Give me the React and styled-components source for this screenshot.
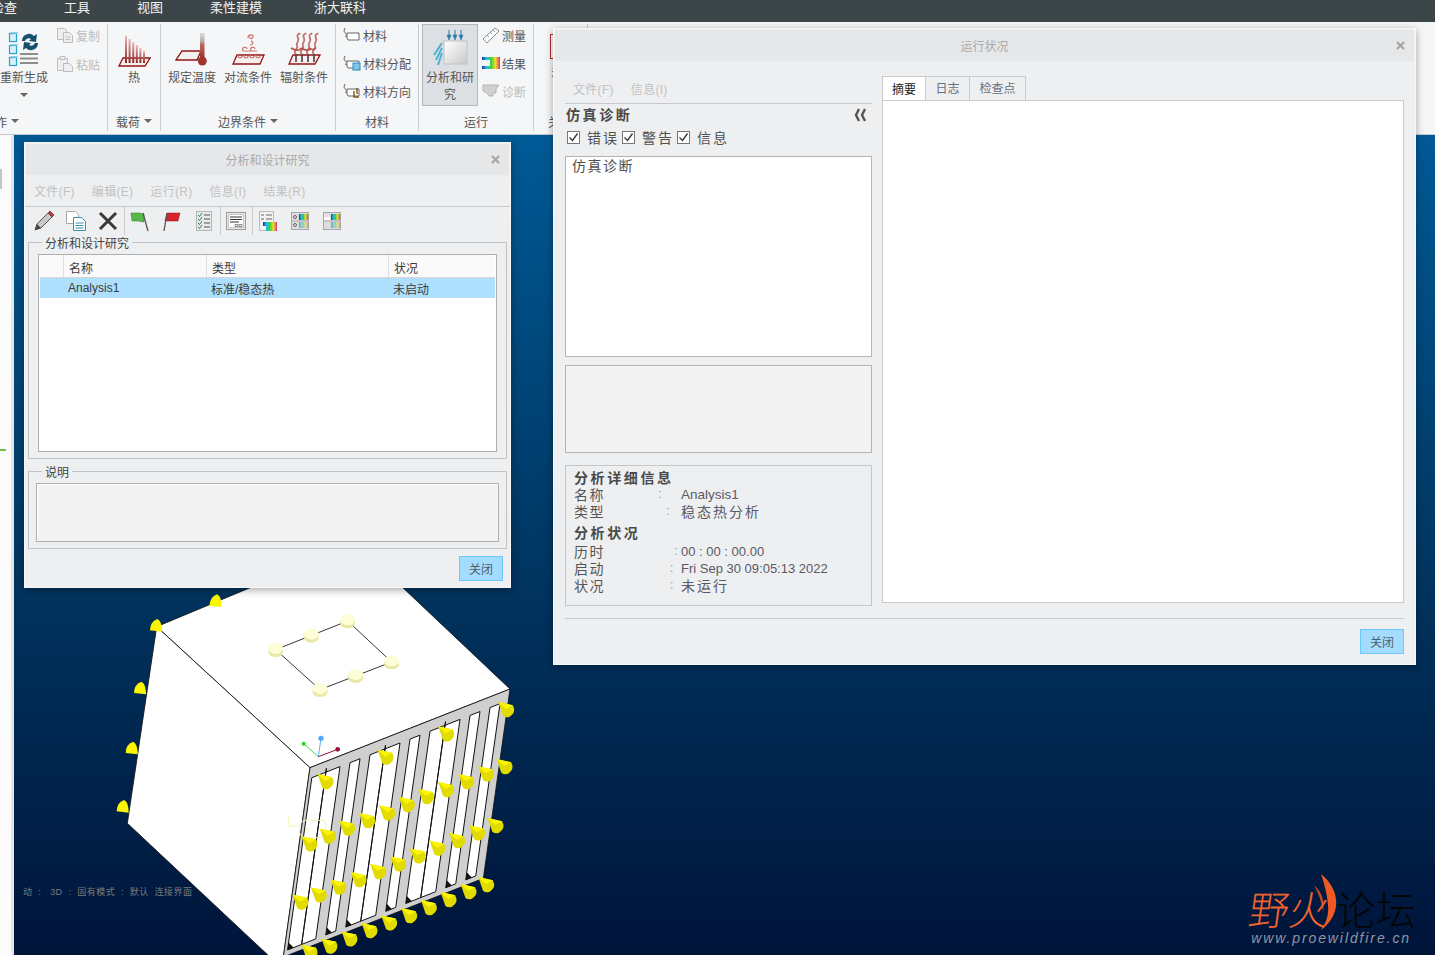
import React from "react";
import styled,{createGlobalStyle} from "styled-components";

const FONT = `"Liberation Sans","Noto Sans CJK SC",sans-serif`;
const GlobalStyle = createGlobalStyle`
    html,body{margin:0;padding:0;background:#fff;}
    body{font-family:${FONT};font-size:12px;color:#444;}
    *{box-sizing:border-box;}
`;
const Page = styled.div`
    width:1435px;height:955px;position:relative;overflow:hidden;display:flex;flex-direction:column;
`;
const MenuBar = styled.div`
    height:22px;flex:none;background:#3c4547;display:flex;align-items:flex-start;margin-left:-9px;line-height:16px;
`;
const MenuBarItem = styled.div`
    font-size:13px;color:#f2f3f3;margin-right:${(p) => p.$gap}px;white-space:nowrap;
`;
const Ribbon = styled.div`
    height:113px;flex:none;background:#f5f6f7;display:flex;border-bottom:1px solid #c4c6c8;margin-left:-11px;
`;
const Group = styled.div`
    width:${(p) => p.$w}px;flex:none;display:flex;flex-direction:column;border-right:${(p) => p.$last ? "none" : "1px solid #c9cbcd"};margin:2px 0 3px;
`;
const GroupBody = styled.div`
    height:88px;flex:none;display:flex;padding:${(p) => p.$pad || "0"};gap:${(p) => p.$gap || 0}px;
`;
const GroupLabel = styled.div`
    flex:1;display:flex;align-items:center;justify-content:${(p) => p.$align || "center"};gap:4px;color:#555;padding-left:${(p) => p.$pl || 0}px;padding-bottom:1px;margin-left:${(p) => p.$ml || 0}px;
    & i{width:0;height:0;border-left:4px solid transparent;border-right:4px solid transparent;border-top:4px solid #666;}
`;
const Caret = styled.i`
    width:0;height:0;border-left:4px solid transparent;border-right:4px solid transparent;border-top:4px solid #666;margin-top:6px;
`;
const BigButton = styled.div`
    width:${(p) => p.$w || 56}px;display:flex;flex-direction:column;align-items:center;color:#555;line-height:17px;text-align:center;flex:none;
    & .ic{height:44px;display:flex;align-items:flex-end;justify-content:center;margin-bottom:2px;}
    ${(p) => p.$active && `background:#dcdfe3;border:1px solid #b5b8bb;height:82px;& .ic{height:42px;margin-bottom:3px;}`}
`;
const NoWrap = styled.div`
    white-space:nowrap;
`;
const SmallCol = styled.div`
    display:flex;flex-direction:column;gap:${(p) => p.$gap || 9}px;padding-top:${(p) => p.$top || 1}px;
`;
const SmallItem = styled.div`
    display:flex;align-items:center;gap:2px;height:20px;white-space:nowrap;color:${(p) => p.$off ? "#bcbcbc" : "#555"};
`;
const Main = styled.div`
    flex:1;display:flex;min-height:0;
`;
const LeftStrip = styled.div`
    width:14px;flex:none;background:#fbfbfb;border-right:3px solid #e4e6e6;position:relative;
    & b{position:absolute;left:0;top:314px;width:6px;height:2px;background:#6cc04a;}
    & u{position:absolute;left:0;top:34px;width:2px;height:20px;background:#c5c5c5;}
`;
const Viewport = styled.div`
    flex:1;position:relative;overflow:hidden;background:linear-gradient(180deg,#005a96 0%,#00345f 55%,#00143a 100%);
`;
const ModelCanvas = styled.svg`
    position:absolute;left:86px;top:450px;width:430px;height:370px;
`;
const StatusOverlay = styled.div`
    position:absolute;left:9px;top:750px;font-size:9px;letter-spacing:.45px;color:#7b7b7b;white-space:pre;
`;
const Watermark = styled.div`
    position:absolute;right:19px;bottom:9px;width:167px;display:flex;flex-direction:column;align-items:flex-end;
`;
const MarkTitle = styled.div`
    display:flex;font-size:40px;line-height:46px;font-weight:300;position:relative;white-space:nowrap;
    & span{color:#f0622e;transform:skewX(-8deg);display:inline-block;}
    & em{font-style:normal;color:#050505;margin-left:7px;}
    & svg{position:absolute;left:64px;top:-16px;}
`;
const MarkUrl = styled.div`
    font-size:14px;font-style:italic;color:#8f97a3;letter-spacing:1.9px;line-height:16px;margin:-4px 5px 0 0;white-space:nowrap;
`;
const Window = styled.div`
    position:absolute;left:${(p) => p.$x}px;top:${(p) => p.$y}px;width:${(p) => p.$w}px;height:${(p) => p.$h}px;background:#eeeff1;border:1px solid #f8f8f8;box-shadow:0 2px 8px rgba(0,0,0,.35);display:flex;flex-direction:column;
`;
const TitleBar = styled.div`
    height:31px;flex:none;margin:1px 1px 0;padding-bottom:1px;background:#e6e7e9;display:flex;align-items:center;justify-content:center;position:relative;color:#a9a9a9;
    & svg{position:absolute;right:9px;top:11px;}
`;
const WinMenu = styled.div`
    display:flex;gap:${(p) => p.$gap || 17}px;color:#c2c2c2;font-size:12px;letter-spacing:.3px;align-items:center;height:${(p) => p.$h || 32}px;border-bottom:1px solid #c8c9cb;padding-left:${(p) => p.$pl || 9}px;padding-bottom:${(p) => p.$pb || 0}px;flex:none;
`;
const Toolbar = styled.div`
    display:flex;align-items:center;height:28px;padding-left:3px;flex:none;
`;
const ToolButton = styled.div`
    width:32px;height:28px;display:flex;align-items:center;justify-content:center;flex:none;
`;
const ToolSep = styled.div`
    width:1px;height:28px;background:#c9cacc;margin:0 -1px 0 0;flex:none;
`;
const Field = styled.fieldset`
    margin:${(p) => p.$m || "0 3px"};padding:${(p) => p.$pad};border:1px solid #c2c3c5;min-width:0;flex:none;height:${(p) => p.$h}px;
`;
const Legend = styled.legend`
    margin-left:${(p) => p.$ml}px;padding:0 3px;line-height:14px;font-size:12px;color:#444;transform:translateY(2px);
`;
const TableBox = styled.div`
    height:198px;border:1px solid #aeaeae;background:#fff;padding:0 1px;
`;
const Row = styled.div`
    display:grid;grid-template-columns:24px 143px 182px 1fr;height:${(p) => p.$head ? 23 : 20}px;align-items:center;color:#3c3c3c;
    background:${(p) => p.$head ? "#fafafa" : "#aee0fd"};
    ${(p) => p.$head && "border-bottom:1px solid #d6d6d6;"}
    & > div{height:100%;display:flex;align-items:center;padding-left:${(p) => p.$head ? 5 : 4}px;padding-top:${(p) => p.$head ? 2 : 0}px;border-right:${(p) => p.$head ? "1px solid #dedede" : "none"};white-space:nowrap;}
    & > div:last-child{border-right:none;}
`;
const NoteBox = styled.div`
    height:59px;background:#f3f3f3;border:1px solid #b0b0b0;box-shadow:inset 1px 1px 0 #fff;
`;
const CloseRow = styled.div`
    display:flex;justify-content:flex-end;padding:${(p) => p.$pad};flex:none;
`;
const CloseButton = styled.div`
    width:44px;height:25px;background:#a3dcff;border:1px solid #6cc8ff;display:flex;align-items:center;justify-content:center;color:#4f5d66;
`;
const RunBody = styled.div`
    flex:none;display:flex;gap:10px;padding:15px 11px 0;
`;
const LeftCol = styled.div`
    width:307px;flex:none;display:flex;flex-direction:column;
`;
const RightCol = styled.div`
    flex:1;display:flex;flex-direction:column;
`;
const DiagHead = styled.div`
    height:24px;display:flex;align-items:center;justify-content:space-between;padding:0 6px 2px 1px;flex:none;
`;
const BoldTitle = styled.div`
    font-size:14px;font-weight:700;color:#4a4a4a;letter-spacing:2.6px;line-height:${(p) => p.$lh || 20}px;margin:${(p) => p.$m || "0"};
`;
const Checks = styled.div`
    display:flex;align-items:center;height:20px;flex:none;padding:0 0 2px 2px;
`;
const CheckItem = styled.div`
    display:flex;align-items:center;gap:7px;font-size:14px;letter-spacing:2px;color:#4f4f4f;margin-right:3px;
    & span{width:13px;height:13px;border:1px solid #777;background:#fff;display:flex;align-items:center;justify-content:center;}
`;
const DiagBox = styled.div`
    height:${(p) => p.$h}px;margin-top:${(p) => p.$mt}px;flex:none;background:${(p) => p.$bg || "#fff"};border:1px solid #b4b4b4;padding:0 6px;font-size:14px;letter-spacing:1.5px;color:#4f4f4f;line-height:19px;
`;
const Details = styled.div`
    height:141px;margin-top:12px;flex:none;border:1px solid #c5c6c8;padding:6px 8px;
`;
const DetailRow = styled.div`
    display:grid;grid-template-columns:${(p) => p.$colon}px ${(p) => 107 - p.$colon}px 1fr;height:17px;align-items:center;font-size:14px;letter-spacing:1.5px;color:#555;white-space:nowrap;
    & .val{font-size:${(p) => p.$small || 14}px;letter-spacing:${(p) => p.$small ? 0 : 2}px;color:#5a5a66;}
    & .col{color:#8a9aa6;font-size:12px;}
`;
const Tabs = styled.div`
    display:flex;height:25px;flex:none;
`;
const Tab = styled.div`
    width:${(p) => p.$w}px;height:25px;padding-bottom:2px;border:1px solid #c8c9cb;border-left:${(p) => p.$first ? "1px solid #c8c9cb" : "none"};border-bottom:${(p) => p.$active ? "none" : "1px solid #c8c9cb"};background:${(p) => p.$active ? "#fff" : "#eeeff1"};color:${(p) => p.$active ? "#222" : "#66707a"};display:flex;align-items:center;justify-content:center;
`;
const TabPanel = styled.div`
    height:503px;flex:none;margin-top:-1px;background:#fff;border:1px solid #c8c9cb;
`;
const RunFooter = styled.div`
    margin:12px 11px 0;border-top:1px solid #c8c9cb;flex:none;
`;

// ---- ribbon icons ----
const XIcon = () => (
    <svg width="9" height="9" viewBox="0 0 9 9"><path d="M1 1l7 7M8 1L1 8" stroke="#a5a5a5" strokeWidth="2.2"/></svg>
);
const RegenIcon = () => (
    <svg width="40" height="36" viewBox="0 0 40 36">
        {[1,13,25].map((y) => (
            <g key={y}>
                <rect x="5.500" y={y+.5} width="7" height="8" fill="#d9eff9" stroke="#2aa3cc" strokeWidth="1.200"/>
                <path d={`M6 ${y}l2-1h6l-1 2z`} fill="#8fcbe2"/>
            </g>
        ))}
        <path d="M18 9a7 7 0 0 1 12-5l3-2-1 8-7-1 2-2a4 4 0 0 0-6 2z" fill="#17506e"/>
        <path d="M34 11a7 7 0 0 1-12 5l-3 2 1-8 7 1-2 2a4 4 0 0 0 6-2z" fill="#17506e"/>
        <path d="M16 22h18M16 26.500h18M16 31h18" stroke="#8d8d8d" strokeWidth="1.800"/>
    </svg>
);
const CopyIcon = () => (
    <svg width="18" height="18" viewBox="0 0 18 18" fill="#eee" stroke="#bdbdbd"><path d="M1.500 2.500h7l2 2v9h-9z"/><path d="M7.500 6.500h6l3 3v7h-9z"/><path d="M9.500 11h5M9.500 13.500h5"/></svg>
);
const PasteIcon = () => (
    <svg width="18" height="18" viewBox="0 0 18 18" fill="#eee" stroke="#bdbdbd"><path d="M1.500 3.500h10v12h-10z"/><path d="M4 1.500h5v3H4z"/><path d="M7.500 8.500h6l3 3v5h-9z"/></svg>
);
const HeatIcon = () => (
    <svg width="34" height="34" viewBox="0 0 34 34">
        <defs><linearGradient id="bar" x1="0" x2="0" y1="0" y2="1"><stop offset="0" stopColor="#e9b9b4"/><stop offset="1" stopColor="#8e2420"/></linearGradient></defs>
        <path d="M6 24h27l-5 8H2z" fill="#f6f1f1" stroke="#941414" strokeWidth="1.300"/>
        {[0,1,2,3,4,5].map((i) => <rect key={i} x={8+i*3.600} y={2+i*3} width="2" height={27-i*3} fill="url(#bar)"/>)}
    </svg>
);
const TempIcon = () => (
    <svg width="34" height="36" viewBox="0 0 34 36">
        <defs><linearGradient id="thermo" x1="0" x2="0" y1="0" y2="1"><stop offset="0" stopColor="#dcdcdc"/><stop offset=".3" stopColor="#b0b0b0"/><stop offset=".42" stopColor="#c06a60"/><stop offset="1" stopColor="#8e2a26"/></linearGradient></defs>
        <path d="M7 19h19l-4 9H1z" fill="#f1f1f1" stroke="#8f1414" strokeWidth="1.300"/>
        <rect x="25" y="1" width="4.500" height="27" fill="url(#thermo)"/>
        <circle cx="27.300" cy="29" r="4.500" fill="#a0332c"/>
    </svg>
);
const ConvectIcon = () => (
    <svg width="34" height="36" viewBox="0 0 34 36" fill="none">
        <path d="M6 23h27l-4 9H2z" fill="#f6f1f1" stroke="#941414" strokeWidth="1.300"/>
        <g stroke="#c9736c" strokeWidth="1.200">
            <path d="M11 24c0 3-5 2-4-1M17 24c0 3-5 2-4-1M23 24c0 3-5 2-4-1M29 24c0 3-5 2-4-1"/>
            <path d="M12 19c-2-4 4-5 4-2M20 19c-2-4 4-5 4-2M12 19h6M18 19h8"/>
            <path d="M19 13c3 0 4-3 1-4M17 6c0-4 6-4 5-1s-4 1-3 0"/>
        </g>
    </svg>
);
const RadIcon = () => (
    <svg width="34" height="36" viewBox="0 0 34 36" fill="none">
        <path d="M6 23h27l-5 9H2z" fill="#f6f1f1" stroke="#941414" strokeWidth="1.300"/>
        {[9,15,21,27].map((x) => <path key={x} d={`M${x} 30v-8`} stroke="#553a38" strokeWidth="1.600"/>)}
        {[7,13,19,25].map((x) => <path key={x} d={`M${x+2} 22c-4-3 3-5 1-8s3-4 1-8 1-3 2-5`} stroke="#c4706a" strokeWidth="1.800"/>)}
        <path d="M4 16c5 3 9 3 10 0M14 16c5 3 9 3 10 0M22 16c3 2 5 2 7 0" stroke="#b4524c" strokeWidth="1.500"/>
    </svg>
);
const MatIcon = ({kind}) => (
    <svg width="18" height="18" viewBox="0 0 18 18" fill="none">
        <path d="M2 2c-2 4 0 5 2 6s0 3-2 2" stroke="#555" strokeWidth="1"/>
        <path d="M4 7h12v7H5l-1-2z" fill="#fff" stroke="#666"/>
        {kind == 1 && <rect x="10" y="9" width="7" height="7" fill="#7cc7ea" stroke="#2a88b8"/>}
        {kind == 2 && <path d="M11 9v6h5M14 6v6" stroke="#7a5a1c" strokeWidth="1.400"/>}
    </svg>
);
const MeasureIcon = () => (
    <svg width="18" height="18" viewBox="0 0 18 18"><path d="M1 13L13 2l4 3L5 17z" fill="#fff" stroke="#8a8a8a"/><path d="M5 9l2 2M8 6l2 2M11 4l2 2" stroke="#6fb2d6"/></svg>
);
const Rainbow = ({id}) => (
    <defs>
        <linearGradient id={id} x1="0" x2="1" y1="0" y2="0">
            <stop offset="0" stopColor="#1530b8"/><stop offset=".25" stopColor="#22c0d8"/><stop offset=".5" stopColor="#3cd040"/><stop offset=".75" stopColor="#f4e020"/><stop offset="1" stopColor="#e02a90"/>
        </linearGradient>
    </defs>
);
const ResultIcon = () => (
    <svg width="18" height="14" viewBox="0 0 18 14"><Rainbow id="rb1"/><path d="M0 1h18v12H0z" fill="url(#rb1)"/><path d="M0 4h8v6H0z" fill="#f5f6f7"/></svg>
);
const DiagIcon = () => (
    <svg width="18" height="14" viewBox="0 0 18 14"><path d="M1 1h16l-3 4v4h-3v3H7L5 9 1 7z" fill="#d0d0d0" stroke="#b5b5b5"/></svg>
);
const AnalysisIcon = () => (
    <svg width="36" height="38" viewBox="0 0 36 38">
        <defs><linearGradient id="sq" x1="0" x2="1" y1="0" y2="1"><stop offset="0" stopColor="#fff"/><stop offset="1" stopColor="#c9c9c9"/></linearGradient></defs>
        <rect x="12" y="12" width="23" height="23" fill="url(#sq)" stroke="#c2c2c2"/>
        {[17,23,29].map((x) => <path key={x} d={`M${x} 1v5l-2 0 2 5 2-5-2 0z`} fill="#2b7ba8" stroke="#2b7ba8" strokeWidth=".6"/>)}
        {[0,5,10].map((d) => <path key={d} d={`M${2+d*.4} ${26+d}L10 ${14+d}`} stroke="#4eb0d2" strokeWidth="2"/>)}
    </svg>
);
const PartIcon = () => (
    <svg width="14" height="30" viewBox="0 0 14 30"><rect x=".5" y=".5" width="13" height="24" fill="#fff" stroke="#b03030"/></svg>
);

// ---- toolbar icons ----
const Pencil = () => (
    <svg width="22" height="22" viewBox="0 0 22 22"><path d="M2 20l2-6L15 3l4 4L8 18z" fill="#c9c9c9" stroke="#555"/><path d="M15 3l2-2 4 4-2 2z" fill="#b8403c" stroke="#7a2a28" strokeWidth=".7"/><path d="M2 20l2-6 4 4z" fill="#444"/></svg>
);
const DocCopy = () => (
    <svg width="22" height="22" viewBox="0 0 22 22"><path d="M1.500 1.500h9l3 3v9h-12z" fill="#fff" stroke="#a8a8a8"/><path d="M8.500 7.500h8l4 4v9h-12z" fill="#fff" stroke="#3a8cb4"/><path d="M10.500 13h8M10.500 15.500h8M10.500 18h8" stroke="#3a8cb4"/></svg>
);
const BigX = () => (
    <svg width="20" height="20" viewBox="0 0 20 20"><path d="M2 2l16 16M18 2L2 18" stroke="#3a3a3a" strokeWidth="3"/></svg>
);
const Flag = ({fill,dark,rev}) => (
    <svg width="20" height="22" viewBox="0 0 20 22">
        {rev
            ? <><path d="M1 3h8l5 1v8l-6-1-6 0z" fill={fill} stroke={dark} strokeWidth=".5"/><path d="M13 3l5 18" stroke="#555" strokeWidth="1.300"/></>
            : <><path d="M5 3h13l-2 8H3z" fill={fill} stroke={dark} strokeWidth=".5"/><path d="M5 3L2 21" stroke="#555" strokeWidth="1.300"/></>}
    </svg>
);
const CheckList = () => (
    <svg width="16" height="20" viewBox="0 0 16 20"><rect x=".5" y=".5" width="15" height="19" fill="#e6e9ea" stroke="#b3b6b8"/>{[4,8,12,16].map((y) => <g key={y}><path d={`M2 ${y}l1.500 1.500L6 ${y-2}`} stroke="#3a7f58" fill="none"/><path d={`M8 ${y}h6`} stroke="#555"/></g>)}</svg>
);
const PanelIcon = () => (
    <svg width="20" height="18" viewBox="0 0 20 18"><rect x=".5" y=".5" width="19" height="17" fill="#e8e8e8" stroke="#9c9c9c"/><rect x="2.500" y="2.500" width="15" height="13" fill="#fff" stroke="#c6c6c6"/><path d="M4 5h12M4 7.500h12M4 10h9" stroke="#333"/><path d="M9 12.500h3v2H9zM13 12.500h3v2h-3z" fill="none" stroke="#888"/></svg>
);
const ReportA = () => (
    <svg width="18" height="20" viewBox="0 0 18 20"><Rainbow id="rb2"/><rect x=".5" y=".5" width="14" height="19" fill="#f2f2f2" stroke="#bbb"/><path d="M2 4h3M2 8h3M7 4h6M7 8h6" stroke="#666"/><path d="M4 11h14v9H7v-5H4z" fill="url(#rb2)"/></svg>
);
const ReportB = ({id,first}) => (
    <svg width="18" height="18" viewBox="0 0 18 18"><Rainbow id={id}/><rect x=".5" y=".5" width="17" height="17" fill="#dedede" stroke="#a8a8a8"/><path d="M8 2h9v6h-9z" fill={`url(#${id})`}/><path d="M8 10h9v6h-9z" fill={`url(#${id})`} opacity=".45"/><path d="M1 9h16" stroke="#aaa"/>{first ? <g fill="none" stroke="#666"><circle cx="4" cy="5" r="1.500"/><circle cx="4" cy="13" r="1.500"/></g> : <path d="M1 5h6v3H1z" fill="#fff"/>}</svg>
);
const Chevrons = () => (
    <svg width="12" height="14" viewBox="0 0 12 14" fill="none" stroke="#555" strokeWidth="2.400"><path d="M5 1L2 7l3 6M11 1L8 7l3 6"/></svg>
);
const Tick = () => (
    <svg width="11" height="11" viewBox="0 0 11 11"><path d="M1.500 5.500l3 3 5-7" fill="none" stroke="#333" strokeWidth="1.300"/></svg>
);
const Flame = () => (
    <svg width="28" height="60" viewBox="0 0 28 60"><path d="M8 2c14 11 20 29 11 44-3 5-7 9-11 12 5-7 8-15 7-25C14 21 11 11 8 2z" fill="#ee5a24"/><path d="M1 13c7 6 11 15 9 27-1-9-4-18-9-27z" fill="#c84a20"/></svg>
);

// ---- model, drawn in 3x coordinates of its own box ----
const TL = [630,548], TR = [1230,312], BL = [550,1116];
const face = (t,v) => [TL[0]+t*(TR[0]-TL[0])+v*(BL[0]-TL[0]),TL[1]+t*(TR[1]-TL[1])+v*(BL[1]-TL[1])];
const pts = (list) => list.map((p) => p.join(",")).join(" ");
const SLOTS = [[.017,.158,true],[.208,.258],[.308,.458,true],[.508,.558],[.608,.758,true],[.808,.858],[.908,.958]];
const CONES = [[1220,372],[1040,445],[858,515],[678,588],[1215,543],[1160,565],[1100,588],[1040,612],[980,633],[922,657],[863,682],[803,705],[743,728],[685,752],[630,775],[1188,720],[1133,742],[1073,765],[1014,788],[955,811],[896,835],[836,858],[777,882],[717,905],[658,928],[603,950],[1160,897],[1107,918],[1047,942],[988,966],[929,990],[869,1012],[810,1035],[750,1060],[690,1082],[630,1100]];
const SIDE_CONES = [[347,48],[168,122],[120,310],[95,490],[68,665]];
const STUDS = [[527,194],[634,151],[743,108],[875,231],[767,272],[660,314]];
const Model = () => (
    <ModelCanvas viewBox="0 0 1290 1110">
        <polygon points="470,0 900,0 1230,312 630,548 170,125" fill="#fff" stroke="#111" strokeWidth="2.500"/>
        <polygon points="170,125 630,548 550,1116 510,1116 82,715" fill="#fff" stroke="#111" strokeWidth="2.500"/>
        <polygon points={pts([TL,TR,[1150,880],BL])} fill="#cfcfcf" stroke="#111" strokeWidth="2.500"/>
        {SLOTS.map(([a,b,wide],i) => (
            <g key={i}>
                <polygon points={pts([face(a,.06),face(b,.06),face(b,.97),face(a,.97)])} fill="#fff" stroke="#111" strokeWidth="3"/>
                {wide && <polygon points={pts([face((a+b)/2,.04),face((a+b)/2,.97)])} stroke="#111" strokeWidth="3"/>}
                <polygon points={pts([face(a,.97),face(a+.03,.97),face(a,.93)])} fill="#111"/>
            </g>
        ))}
        <path d="M527 194L743 108L875 231L660 314Z" fill="none" stroke="#111" strokeWidth="2.500"/>
        {STUDS.map(([x,y]) => (
            <g key={x} transform={`translate(${x} ${y})`}>
                <path d="M-22 -4v12a22 14 0 0 0 44 0v-12z" fill="#e8e8a8"/>
                <ellipse cx="0" cy="-4" rx="22" ry="17" fill="#fdfdd8"/>
            </g>
        ))}
        <path d="M655 515L663 460" stroke="#3aa0ee" strokeWidth="2.500"/>
        <path d="M655 515L611 476" stroke="#1fd21f" strokeWidth="2.500"/>
        <path d="M655 515L713 493" stroke="#8a1030" strokeWidth="3"/>
        <circle cx="663" cy="460" r="8" fill="#55aaf5"/><circle cx="611" cy="476" r="6" fill="#18dc18"/><circle cx="713" cy="493" r="7" fill="#9a1038"/>
        {SIDE_CONES.map(([x,y]) => (
            <path key={y} transform={`translate(${x} ${y})`} d="M-18 14Q-18 -12 4 -20Q18 -14 18 18Z" fill="#fbf500"/>
        ))}
        <path d="M566 693v30h32M598 732a22 22 0 0 1 16-26h52q10 0 10 10v32q0 10-10 10h-52a22 22 0 0 1-16-26zM621 730a5 5 0 1 0 .1 0" fill="none" stroke="#f7f5b5" strokeWidth="3"/>
        {CONES.map(([x,y]) => (
            <g key={`${x}-${y}`} transform={`translate(${x} ${y}) scale(1.15)`}>
                <path d="M-22 -18L16 -10Q26 8 8 20Q-6 24 -10 16Z" fill="#e2db00"/>
                <path d="M-22 -18L16 -10L-2 0Z" fill="#fbf500"/>
            </g>
        ))}
    </ModelCanvas>
);

const App = () => {
    return (
        <Page>
            <GlobalStyle/>
            <MenuBar>
                <MenuBarItem $gap={47}>检查</MenuBarItem>
                <MenuBarItem $gap={47}>工具</MenuBarItem>
                <MenuBarItem $gap={47}>视图</MenuBarItem>
                <MenuBarItem $gap={52}>柔性建模</MenuBarItem>
                <MenuBarItem $gap={0}>浙大联科</MenuBarItem>
            </MenuBar>
            <Ribbon>
                <Group $w={119}>
                    <GroupBody $pad="0 0 0 5px" $gap={2}>
                        <BigButton $w={60}>
                            <div className="ic"><RegenIcon/></div>
                            <NoWrap>重新生成</NoWrap>
                            <Caret/>
                        </BigButton>
                        <SmallCol $gap={9}>
                            <SmallItem $off><CopyIcon/>复制</SmallItem>
                            <SmallItem $off><PasteIcon/>粘贴</SmallItem>
                        </SmallCol>
                    </GroupBody>
                    <GroupLabel $align="flex-start" $ml={-6}>操作<i/></GroupLabel>
                </Group>
                <Group $w={53}>
                    <GroupBody>
                        <BigButton $w={52}>
                            <div className="ic"><HeatIcon/></div>
                            <div>热</div>
                        </BigButton>
                    </GroupBody>
                    <GroupLabel>载荷<i/></GroupLabel>
                </Group>
                <Group $w={175}>
                    <GroupBody $pad="0 0 0 3px">
                        <BigButton><div className="ic"><TempIcon/></div><div>规定温度</div></BigButton>
                        <BigButton><div className="ic"><ConvectIcon/></div><div>对流条件</div></BigButton>
                        <BigButton><div className="ic"><RadIcon/></div><div>辐射条件</div></BigButton>
                    </GroupBody>
                    <GroupLabel>边界条件<i/></GroupLabel>
                </Group>
                <Group $w={83}>
                    <GroupBody $pad="0 0 0 7px">
                        <SmallCol $gap={8}>
                            <SmallItem><MatIcon kind={0}/>材料</SmallItem>
                            <SmallItem><MatIcon kind={1}/>材料分配</SmallItem>
                            <SmallItem><MatIcon kind={2}/>材料方向</SmallItem>
                        </SmallCol>
                    </GroupBody>
                    <GroupLabel>材料</GroupLabel>
                </Group>
                <Group $w={115}>
                    <GroupBody $pad="0 0 0 3px" $gap={4}>
                        <BigButton $active><div className="ic"><AnalysisIcon/></div><div>分析和研究</div></BigButton>
                        <SmallCol $gap={8}>
                            <SmallItem><MeasureIcon/>测量</SmallItem>
                            <SmallItem><ResultIcon/>结果</SmallItem>
                            <SmallItem $off><DiagIcon/>诊断</SmallItem>
                        </SmallCol>
                    </GroupBody>
                    <GroupLabel>运行</GroupLabel>
                </Group>
                <Group $w={54}>
                    <GroupBody $pad="10px 0 0 13px">
                        <BigButton $w={20}><PartIcon/><div>关</div></BigButton>
                    </GroupBody>
                    <GroupLabel $align="flex-start" $pl={14}>关</GroupLabel>
                </Group>
            </Ribbon>
            <Main>
                <LeftStrip><u/><b/></LeftStrip>
                <Viewport>
                    <Model/>
                    <StatusOverlay>{"动  :   3D  :  固有模式  :  默认  连接界面"}</StatusOverlay>
                    <Watermark>
                        <MarkTitle><Flame/><span>野火</span><em>论坛</em></MarkTitle>
                        <MarkUrl>www.proewildfire.cn</MarkUrl>
                    </Watermark>
                </Viewport>
            </Main>
            <Window $x={24} $y={142} $w={487} $h={446}>
                <TitleBar>分析和设计研究<XIcon/></TitleBar>
                <WinMenu $h={32}>
                    <div>文件(F)</div><div>编辑(E)</div><div>运行(R)</div><div>信息(I)</div><div>结果(R)</div>
                </WinMenu>
                <Toolbar>
                    <ToolButton><Pencil/></ToolButton>
                    <ToolButton><DocCopy/></ToolButton>
                    <ToolButton><BigX/></ToolButton>
                    <ToolSep/>
                    <ToolButton><Flag fill="#58b84a" dark="#2e7a28" rev/></ToolButton>
                    <ToolButton><Flag fill="#d8242c" dark="#8c1418"/></ToolButton>
                    <ToolButton><CheckList/></ToolButton>
                    <ToolSep/>
                    <ToolButton><PanelIcon/></ToolButton>
                    <ToolSep/>
                    <ToolButton><ReportA/></ToolButton>
                    <ToolButton><ReportB id="rb3" first/></ToolButton>
                    <ToolButton><ReportB id="rb4"/></ToolButton>
                </Toolbar>
                <Field $h={224} $m="0 3px" $pad="5px 9px 6px">
                    <Legend $ml={4}>分析和设计研究</Legend>
                    <TableBox>
                        <Row $head><div/><div>名称</div><div>类型</div><div>状况</div></Row>
                        <Row><div/><div>Analysis1</div><div>标准/稳态热</div><div>未启动</div></Row>
                    </TableBox>
                </Field>
                <Field $h={85} $m="5px 3px 0" $pad="5px 7px 6px">
                    <Legend $ml={6}>说明</Legend>
                    <NoteBox/>
                </Field>
                <CloseRow $pad="7px 7px 0 0"><CloseButton>关闭</CloseButton></CloseRow>
            </Window>
            <Window $x={553} $y={28} $w={863} $h={637}>
                <TitleBar>运行状况<XIcon/></TitleBar>
                <RunBody>
                    <LeftCol>
                        <WinMenu $h={28} $gap={17} $pl={8} $pb={3}><div>文件(F)</div><div>信息(I)</div></WinMenu>
                        <DiagHead><BoldTitle>仿真诊断</BoldTitle><Chevrons/></DiagHead>
                        <Checks>
                            <CheckItem><span><Tick/></span>错误</CheckItem>
                            <CheckItem><span><Tick/></span>警告</CheckItem>
                            <CheckItem><span><Tick/></span>信息</CheckItem>
                        </Checks>
                        <DiagBox $h={201} $mt={8}>仿真诊断</DiagBox>
                        <DiagBox $h={88} $mt={8} $bg="#f3f3f3"/>
                        <Details>
                            <BoldTitle $lh={12}>分析详细信息</BoldTitle>
                            <DetailRow $colon={84} $small={13.5}><div>名称</div><div className="col">:</div><div className="val">Analysis1</div></DetailRow>
                            <DetailRow $colon={92}><div>类型</div><div className="col">:</div><div className="val">稳态热分析</div></DetailRow>
                            <BoldTitle $lh={24} $m="3px 0 -4px">分析状况</BoldTitle>
                            <DetailRow $colon={100} $small={13}><div>历时</div><div className="col">:</div><div className="val">00 : 00 : 00.00</div></DetailRow>
                            <DetailRow $colon={96} $small={13}><div>启动</div><div className="col">:</div><div className="val">Fri Sep 30 09:05:13 2022</div></DetailRow>
                            <DetailRow $colon={96}><div>状况</div><div className="col">:</div><div className="val">未运行</div></DetailRow>
                        </Details>
                    </LeftCol>
                    <RightCol>
                        <Tabs>
                            <Tab $w={44} $first $active>摘要</Tab>
                            <Tab $w={44}>日志</Tab>
                            <Tab $w={56}>检查点</Tab>
                        </Tabs>
                        <TabPanel/>
                    </RightCol>
                </RunBody>
                <RunFooter/>
                <CloseRow $pad="10px 11px 0 0"><CloseButton>关闭</CloseButton></CloseRow>
            </Window>
        </Page>
    );
}
export default App;
